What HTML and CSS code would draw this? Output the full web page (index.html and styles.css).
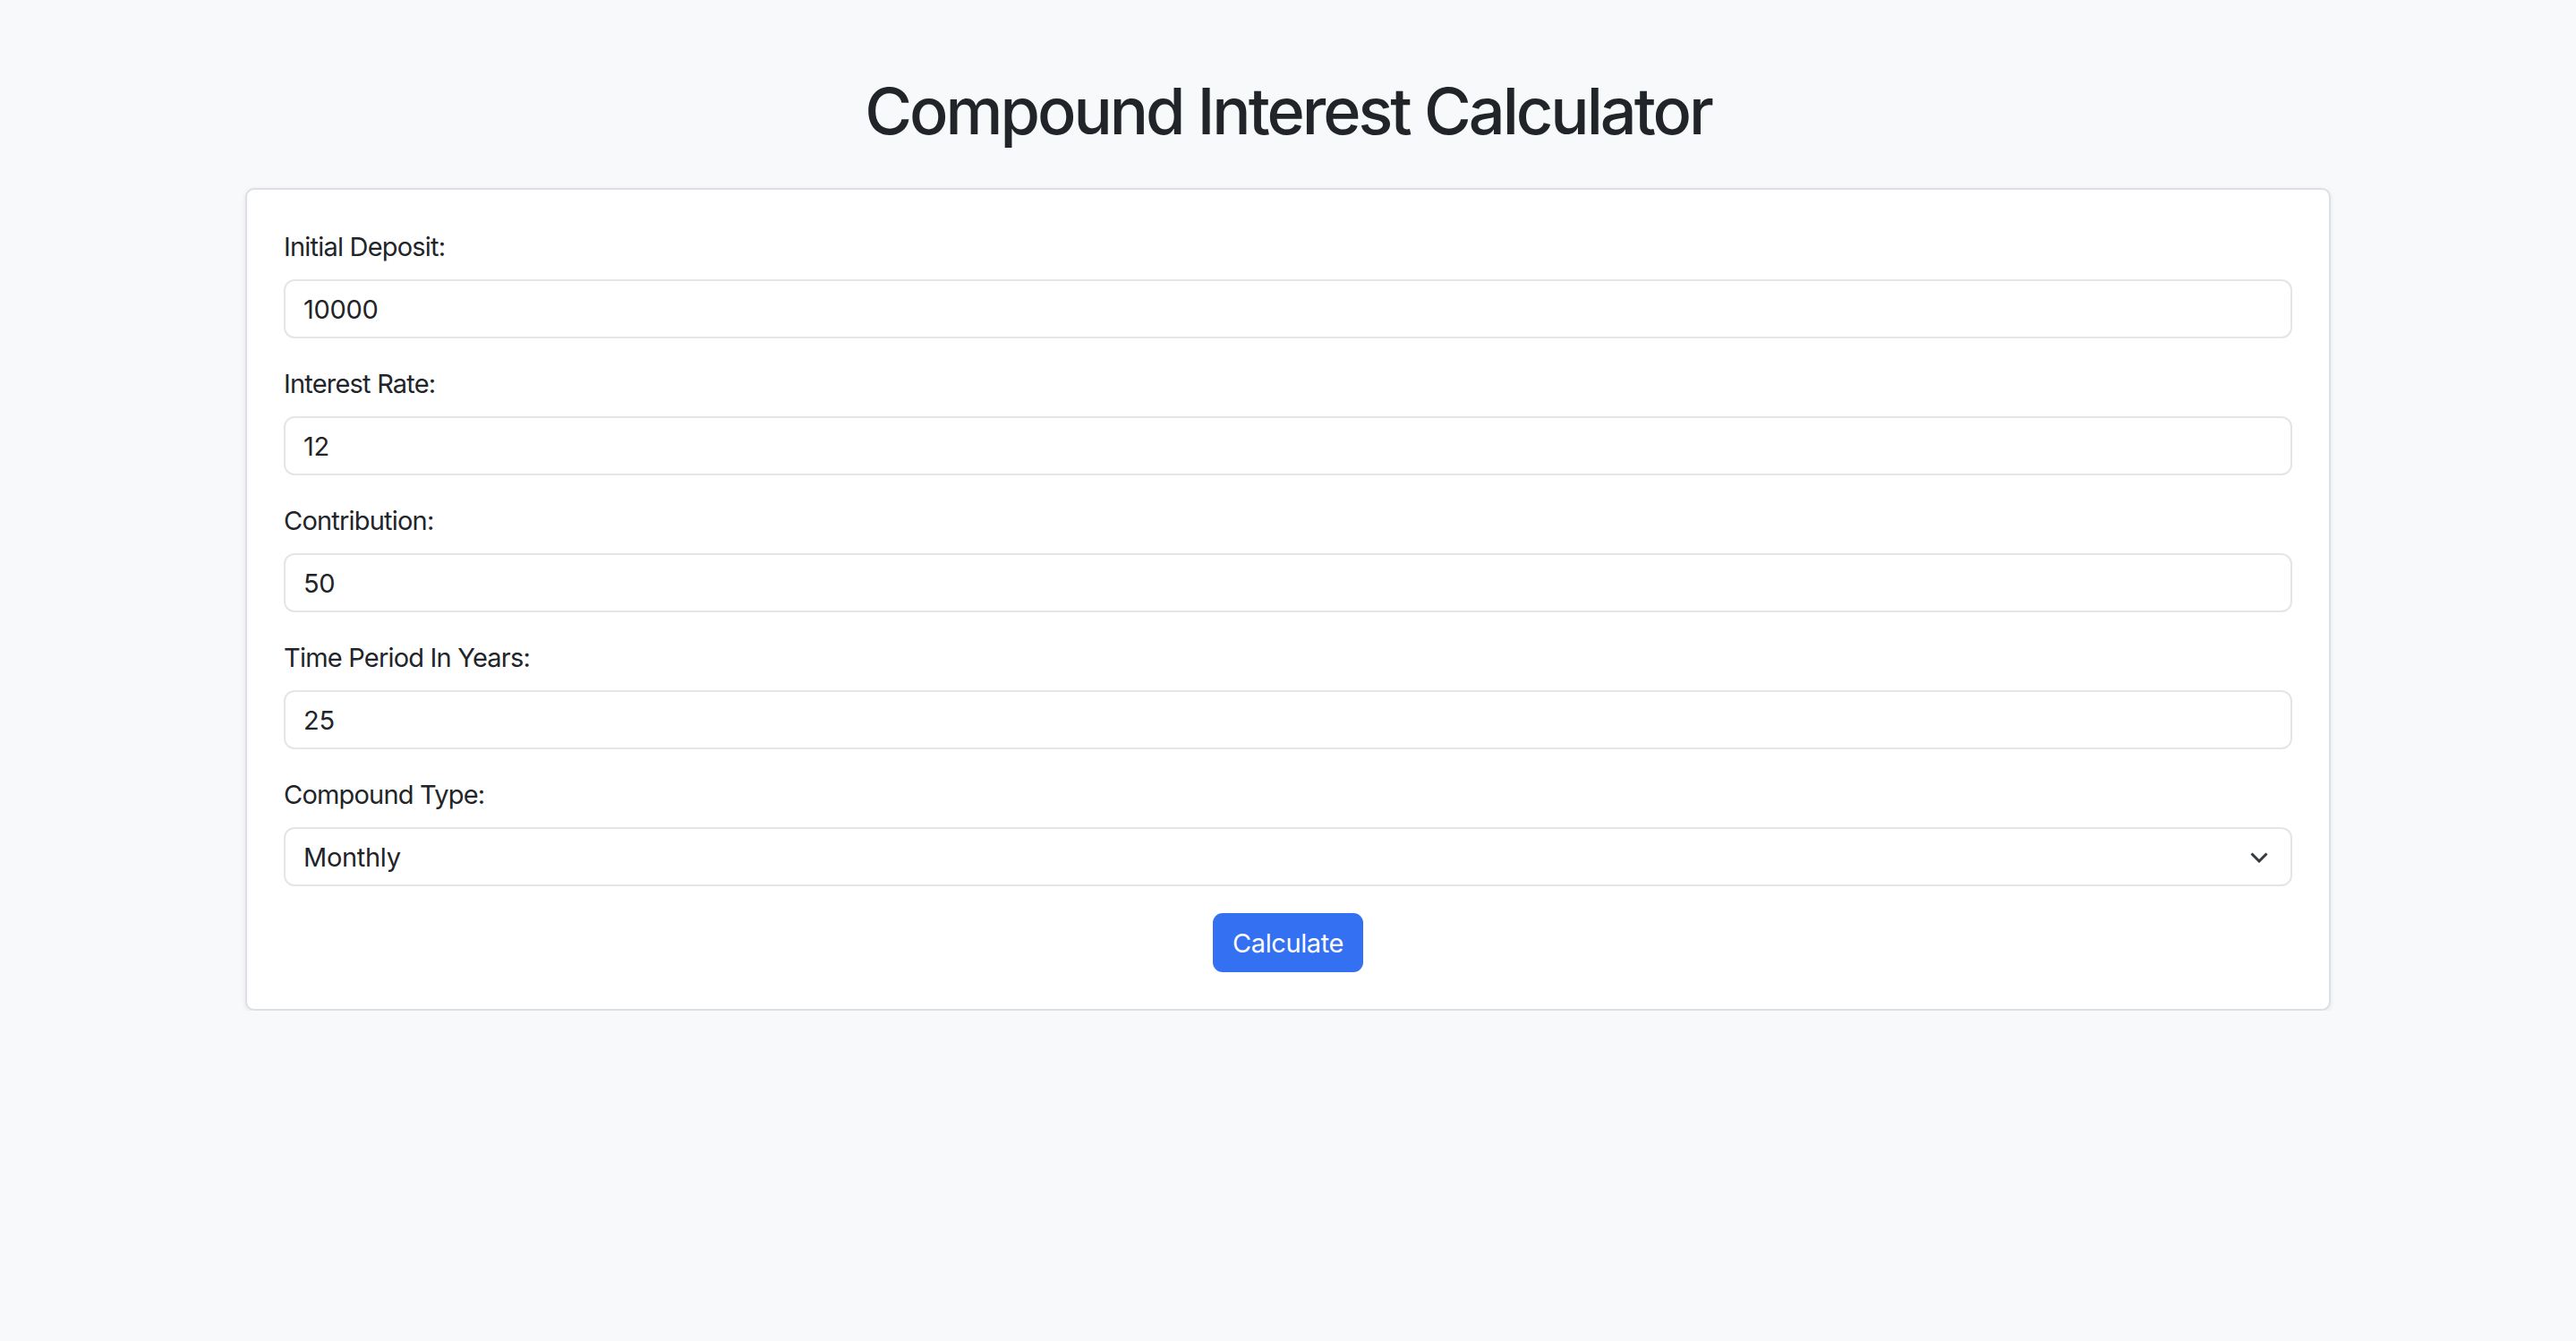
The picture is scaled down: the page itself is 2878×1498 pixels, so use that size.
FILE: index.html
```html
<!DOCTYPE html>
<html lang="en">
<head>
<meta charset="utf-8">
<title>Compound Interest Calculator</title>
<link rel="stylesheet" href="styles.css">
</head>
<body>
<main class="page">
  <h1 class="title">Compound Interest Calculator</h1>
  <form class="card">
    <div class="field">
      <label class="label" for="deposit">Initial Deposit:</label>
      <input class="control" id="deposit" type="text" value="10000">
    </div>
    <div class="field">
      <label class="label" for="rate">Interest Rate:</label>
      <input class="control" id="rate" type="text" value="12">
    </div>
    <div class="field">
      <label class="label" for="contribution">Contribution:</label>
      <input class="control" id="contribution" type="text" value="50">
    </div>
    <div class="field">
      <label class="label" for="years">Time Period In Years:</label>
      <input class="control" id="years" type="text" value="25">
    </div>
    <div class="field field-last">
      <label class="label" for="type">Compound Type:</label>
      <div class="select-wrap">
        <select class="control select" id="type">
          <option>Monthly</option>
          <option>Quarterly</option>
          <option>Annually</option>
        </select>
        <svg class="chevron" width="20" height="12" viewBox="0 0 20 12" aria-hidden="true">
          <path d="M1.5 1.5 L10 10 L18.5 1.5" fill="none" stroke="#343a40" stroke-width="3" stroke-linecap="butt" stroke-linejoin="miter"/>
        </svg>
      </div>
    </div>
    <div class="actions">
      <button class="btn" type="button">Calculate</button>
    </div>
  </form>
</main>
</body>
</html>
```

FILE: styles.css
```css
html, body {
  margin: 0;
  padding: 0;
}

body {
  background: #f8f9fa;
  color: #212529;
  font-family: Inter, "Noto Sans", "Liberation Sans", sans-serif;
}

.page {
  width: 2330px;
  margin: 0 auto;
  padding-top: 80px;
}

.title {
  margin: 0 0 42px;
  font-size: 72px;
  font-weight: 500;
  line-height: 88px;
  text-align: center;
  letter-spacing: -3px;
}

.card {
  background: #fff;
  border: 2px solid #dcdfe3;
  border-radius: 10px;
  padding: 41px;
  box-shadow: 0 2px 6px rgba(0, 0, 0, 0.08);
}

.field {
  margin-bottom: 28px;
}

.field-last {
  margin-bottom: 30px;
}

.label {
  display: block;
  font-size: 29px;
  line-height: 45px;
  margin-bottom: 14px;
  color: #212529;
  letter-spacing: -0.8px;
}

.control {
  display: block;
  box-sizing: border-box;
  width: 100%;
  height: 66px;
  padding: 0 20px;
  border: 2px solid #e3e5e8;
  border-radius: 12px;
  background: #fff;
  color: #212529;
  font-family: inherit;
  font-size: 29px;
  letter-spacing: -0.3px;
  outline: none;
}

.select-wrap {
  position: relative;
}

.select {
  appearance: none;
  -webkit-appearance: none;
}

.chevron {
  position: absolute;
  right: 27px;
  top: 28px;
  pointer-events: none;
}

.actions {
  display: flex;
  justify-content: center;
}

.btn {
  height: 66px;
  padding: 0 22px;
  border: none;
  border-radius: 11px;
  background: #3370f2;
  color: #fff;
  font-family: inherit;
  font-size: 29px;
  letter-spacing: -0.4px;
  cursor: pointer;
}
```
